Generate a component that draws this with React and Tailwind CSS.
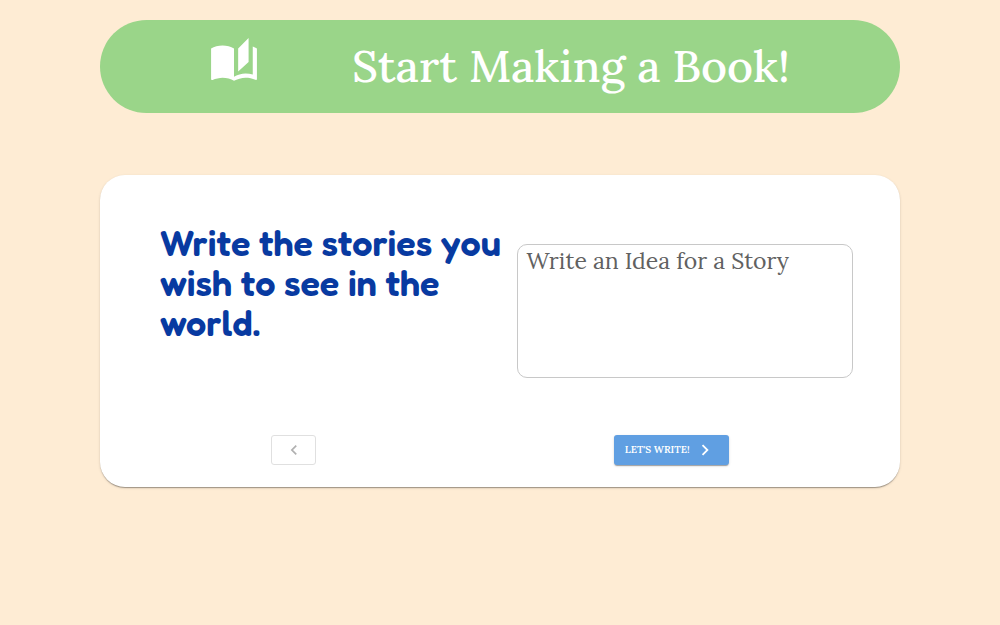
import React, { useState } from 'react';
import { MdAutoStories, MdChevronLeft, MdChevronRight } from 'react-icons/md';

const Header = () => {
  return (
    <header className="flex items-center h-[93px] pl-[109px] pb-0.5 gap-[93px] rounded-full bg-[#9ad589] text-white">
      <MdAutoStories className="size-[50px] shrink-0 -mt-2.5" />
      <h1 className="font-['Lora','Liberation_Serif',serif] font-medium text-[45px] leading-none whitespace-nowrap">
        Start Making a Book!
      </h1>
    </header>
  );
};

const StoryCard = () => {
  const [idea, setIdea] = useState('');

  const onSubmitHandler = (e) => {
    e.preventDefault();
  };

  return (
    <form
      onSubmit={onSubmitHandler}
      className="mt-[62px] pt-12 pb-[22px] rounded-[25px] bg-white shadow-[0_2px_1px_-1px_rgba(0,0,0,0.2),0_1px_1px_0_rgba(0,0,0,0.14),0_1px_3px_0_rgba(0,0,0,0.12)]"
    >
      <div className="grid grid-cols-2 gap-5 pl-15 pr-[47px]">
        <h2 className="font-['Fredoka_One','Fredoka','Lato',sans-serif] font-semibold text-[36px] leading-10 text-[#083aa1] whitespace-nowrap">
          Write the stories you
          <br />
          wish to see in the
          <br />
          world.
        </h2>
        <textarea
          aria-label="Story idea"
          placeholder="Write an Idea for a Story"
          value={idea}
          onChange={(e) => setIdea(e.target.value)}
          className="mt-[21px] h-[134px] w-full resize-none rounded-[10px] border border-[#c8c8c8] px-[9px] font-['Lora','Liberation_Serif',serif] text-[23px] leading-8 text-[#616161] placeholder-[#616161] outline-none"
        />
      </div>
      <div className="mt-[57px] grid grid-cols-2 justify-items-center pl-[5px] pr-10">
        <button
          type="button"
          disabled
          aria-label="Back"
          className="flex h-[30px] w-[45px] items-center justify-center rounded-[3px] border border-[#e0e0e0] text-[#b0b0b0]"
        >
          <MdChevronLeft className="size-[20px]" />
        </button>
        <button
          type="submit"
          className="flex h-[30px] w-[115px] items-center gap-1 rounded-[3px] bg-[#609fe2] pl-[11px] pb-px font-['Lora','Liberation_Serif',serif] text-[10px] font-semibold text-white shadow-[0_2px_1px_-1px_rgba(0,0,0,0.2),0_1px_1px_0_rgba(0,0,0,0.14),0_1px_3px_0_rgba(0,0,0,0.12)] cursor-pointer"
        >
          LET'S WRITE!
          <MdChevronRight className="size-[22px]" />
        </button>
      </div>
    </form>
  );
};

const App = () => {
  return (
    <div className="min-h-screen bg-[#feecd4]">
      <main className="mx-auto w-4/5 pt-5">
        <Header />
        <StoryCard />
      </main>
    </div>
  );
};

export default App;
